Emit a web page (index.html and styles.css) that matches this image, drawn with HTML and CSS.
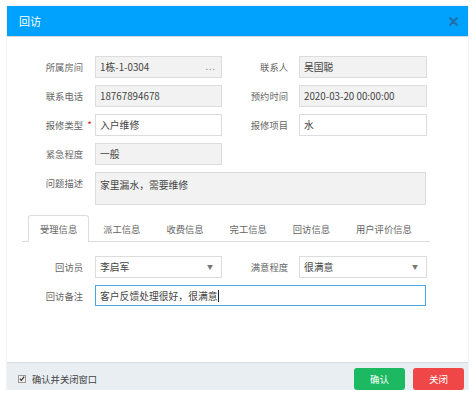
FILE: index.html
```html
<!DOCTYPE html>
<html lang="zh-CN">
<head>
  <meta charset="UTF-8">
  <meta name="viewport" content="width=device-width, initial-scale=1.0">
  <title>回访</title>
  <link rel="stylesheet" href="styles.css">
</head>
<body>
<div class="dialog">
  <div class="dialog-header">
    <span class="dialog-title">回访</span>
    <svg class="close-icon" width="9" height="9" viewBox="0 0 9 9">
      <path d="M1.2 1.2L7.8 7.8M7.8 1.2L1.2 7.8" stroke="#1f70a8" stroke-width="2.2" stroke-linecap="round"/>
    </svg>
  </div>

  <div class="dialog-body">
    <div class="form-row">
      <label class="label">所属房间</label>
      <div class="field readonly">1栋-1-0304<span class="more">...</span></div>
      <label class="label label-right">联系人</label>
      <div class="field readonly field-right">吴国聪</div>
    </div>
    <div class="form-row">
      <label class="label">联系电话</label>
      <div class="field readonly">18767894678</div>
      <label class="label label-right">预约时间</label>
      <div class="field readonly field-right">2020-03-20 00:00:00</div>
    </div>
    <div class="form-row">
      <label class="label">报修类型<span class="required">*</span></label>
      <div class="field">入户维修</div>
      <label class="label label-right">报修项目</label>
      <div class="field field-right">水</div>
    </div>
    <div class="form-row">
      <label class="label">紧急程度</label>
      <div class="field readonly">一般</div>
    </div>
    <div class="form-row row-desc">
      <label class="label">问题描述</label>
      <div class="field readonly field-area">家里漏水，需要维修</div>
    </div>

    <div class="tabs">
      <div class="tab active">受理信息</div>
      <div class="tab">派工信息</div>
      <div class="tab">收费信息</div>
      <div class="tab">完工信息</div>
      <div class="tab">回访信息</div>
      <div class="tab">用户评价信息</div>
    </div>

    <div class="tab-pane">
      <div class="form-row">
        <label class="label">回访员</label>
        <div class="field select">李启军<span class="caret">▼</span></div>
        <label class="label label-right">满意程度</label>
        <div class="field select field-right">很满意<span class="caret">▼</span></div>
      </div>
      <div class="form-row">
        <label class="label">回访备注</label>
        <div class="field field-wide focused">客户反馈处理很好，很满意<span class="cursor"></span></div>
      </div>
    </div>
  </div>

  <div class="dialog-footer">
    <label class="check">
      <span class="check-box">
        <svg width="7" height="7" viewBox="0 0 7 7"><path d="M1 3.8L2.8 5.6L6 1.2" fill="none" stroke="#333" stroke-width="1.4"/></svg>
      </span>
      确认并关闭窗口
    </label>
    <div class="buttons">
      <button class="btn btn-ok">确认</button>
      <button class="btn btn-close">关闭</button>
    </div>
  </div>
</div>
</body>
</html>
```

FILE: styles.css
```css
body {
  margin: 0;
  background-color: #fff;
  font-family: "Noto Sans CJK SC", "Microsoft YaHei", sans-serif;
  font-size: 9.3px;
  color: #666;
}

.dialog {
  width: 461px;
  margin: 6px 0 0 7px;
  background-color: #fff;
  box-shadow: 0 0 2px rgba(0,0,0,0.15);
}

.dialog-header {
  height: 30px;
  padding: 0 10px 0 12px;
  display: flex;
  align-items: center;
  justify-content: space-between;
  background-color: #00a2fd;
  border-bottom: 1px solid #d6d6d6;
}

.dialog-title {
  color: #fff;
  font-size: 11px;
}

.dialog-body {
  padding: 19px 0 0 0;
  height: 306px;
}

.form-row {
  display: flex;
  align-items: flex-start;
  margin-bottom: 7px;
}

.row-desc {
  margin-top: 1px;
}

.label {
  width: 76px;
  margin-right: 12px;
  text-align: right;
  line-height: 22px;
  position: relative;
}

.label-right {
  width: 66px;
  margin-right: 11px;
}

.required {
  position: absolute;
  right: -9px;
  top: 0;
  color: #e02020;
  font-size: 10px;
}

.field {
  box-sizing: border-box;
  width: 127px;
  height: 22px;
  padding: 0 4px;
  border: 1px solid #dcdcdc;
  background-color: #fff;
  color: #444;
  font-size: 9.8px;
  line-height: 20px;
  display: flex;
  align-items: center;
  white-space: nowrap;
}

.field-right {
  width: 128px;
}

.readonly {
  background-color: #f2f2f2;
}

.more {
  margin-left: auto;
  margin-right: 1px;
  color: #888;
  letter-spacing: 1px;
  font-size: 9px;
}

.field-area {
  width: 331px;
  height: 33px;
  align-items: flex-start;
  padding-top: 2px;
}

.tabs {
  display: flex;
  width: 402px;
  height: 26px;
  margin: 10px 0 0 15px;
  padding-left: 6px;
  border-bottom: 1px solid #dcdcdc;
}

.tab {
  box-sizing: border-box;
  flex-shrink: 0;
  white-space: nowrap;
  height: 26px;
  padding: 0 11px;
  margin-right: 2px;
  line-height: 26px;
  color: #666;
  border: 1px solid transparent;
  border-bottom: none;
}

.tab.active {
  height: 27px;
  background-color: #fff;
  border-color: #dcdcdc;
  border-radius: 3px 3px 0 0;
}

.tab-pane {
  padding-top: 14px;
}

.select .caret {
  margin-left: auto;
  margin-right: 4px;
  color: #777;
  font-size: 6px;
}

.field-wide {
  width: 331px;
  height: 21px;
}

.focused {
  border-color: #4aa8dc;
}

.cursor {
  display: inline-block;
  width: 1px;
  height: 12px;
  background-color: #222;
}

.dialog-footer {
  box-sizing: border-box;
  height: 28px;
  padding: 5px 4px 1px 11px;
  display: flex;
  align-items: center;
  justify-content: space-between;
  background-color: #e9eef3;
  border-top: 1px solid #d5dbe0;
}

.check {
  display: flex;
  align-items: center;
  color: #444;
}

.check-box {
  box-sizing: border-box;
  width: 8px;
  height: 8px;
  margin-right: 6px;
  border: 1px solid #999;
  background-color: #eee;
  display: flex;
  align-items: center;
  justify-content: center;
}

.buttons {
  display: flex;
}

.btn {
  width: 51px;
  height: 22px;
  margin-left: 8px;
  border: none;
  border-radius: 3px;
  color: #fff;
  font-family: inherit;
  font-size: 9.5px;
  cursor: pointer;
}

.btn-ok {
  background-color: #1cb962;
}

.btn-close {
  background-color: #ef4747;
}
```
